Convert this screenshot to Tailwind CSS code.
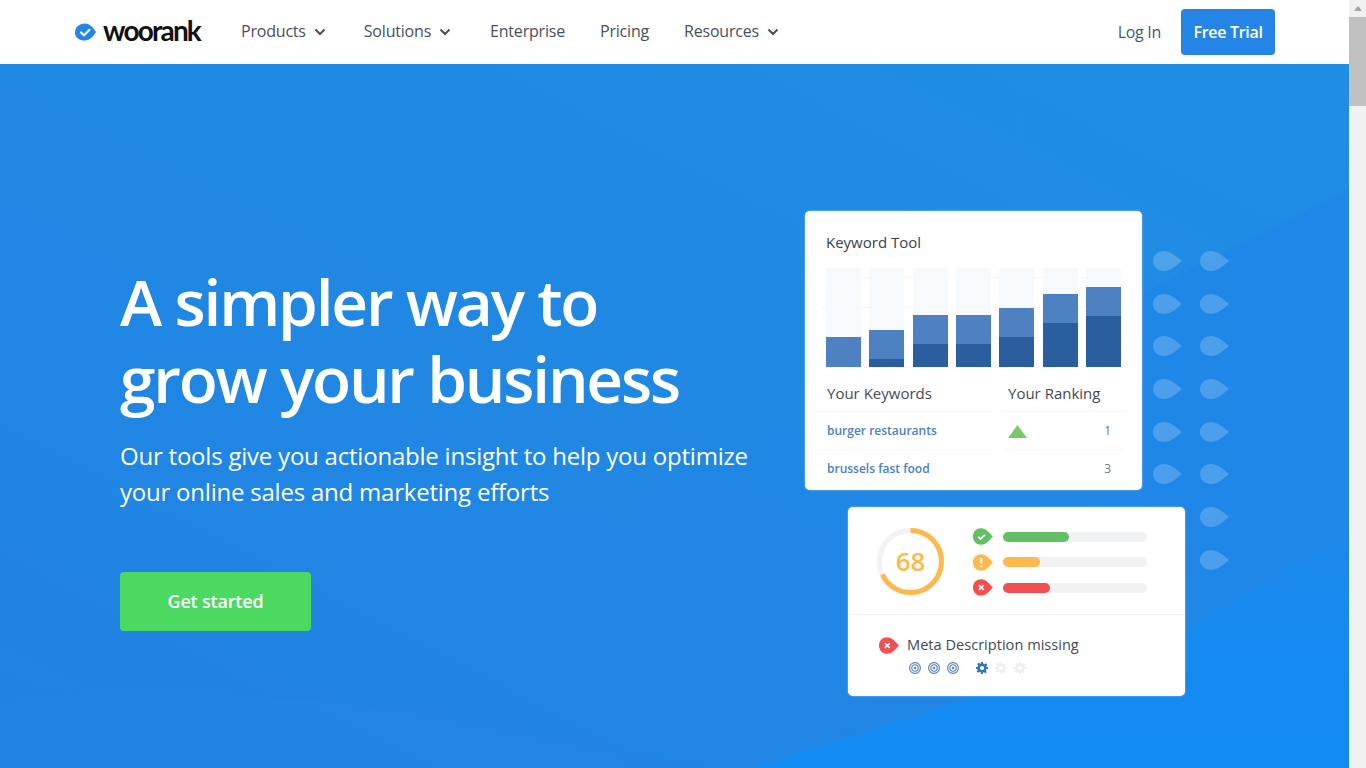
<!DOCTYPE html>
<html lang="en">
<head>
<meta charset="utf-8">
<title>WooRank</title>
<script src="https://cdn.jsdelivr.net/npm/@tailwindcss/browser@4"></script>
</head>
<body class="m-0 overflow-hidden font-['Open_Sans',sans-serif]">
<svg width="0" height="0" class="absolute">
  <defs>
    <symbol id="drop" viewBox="0 0 29 20"><path d="M0 10C0 4 5 0 11 0C18 0 24 6 29 10C24 14 18 20 11 20C5 20 0 16 0 10Z" fill="currentColor"/></symbol>
    <symbol id="target" viewBox="0 0 12 12"><circle cx="6" cy="6" r="5.4" fill="none" stroke="currentColor" stroke-width="1.1"/><circle cx="6" cy="6" r="3.2" fill="none" stroke="currentColor" stroke-width="1.1"/><circle cx="6" cy="6" r="1.2" fill="currentColor"/></symbol>
    <symbol id="gear" viewBox="0 0 12 12"><path d="M5 0h2l.3 1.7 1.1.5L9.9 1.2l1.4 1.4-1 1.5.5 1.1L12 5v2l-1.7.3-.5 1.1 1 1.5-1.4 1.4-1.5-1-1.1.5L7 12H5l-.3-1.7-1.1-.5-1.5 1-1.4-1.4 1-1.5-.5-1.1L0 7V5l1.7-.3.5-1.1-1-1.5L2.6.7l1.5 1 1.1-.5L5 0ZM6 3.9a2.1 2.1 0 1 0 0 4.2 2.1 2.1 0 0 0 0-4.2Z" fill="currentColor" fill-rule="evenodd"/></symbol>
    <linearGradient id="fade" x1="0" y1="0" x2="1" y2="0"><stop offset="0" stop-color="#1f85e6" stop-opacity="0"/><stop offset="0.6" stop-color="#1f86e6" stop-opacity="0.8"/><stop offset="1" stop-color="#1e87e8"/></linearGradient>
    <linearGradient id="glow" x1="0" y1="0" x2="0" y2="1"><stop offset="0" stop-color="#1c88ea"/><stop offset="0.45" stop-color="#168af0"/><stop offset="1" stop-color="#118af3"/></linearGradient>
  </defs>
</svg>
<div class="flex h-[768px] w-[1366px] overflow-hidden">
  <div class="flex w-[1349px] shrink-0 flex-col">
    <header class="flex h-[64px] shrink-0 items-center justify-between bg-white pl-[75px] pr-[74px]">
      <div class="flex items-center">
        <div class="flex w-[166px] items-center gap-[7px]">
          <svg width="21" height="18" viewBox="0 0 21 18"><path d="M0 9.5C0 4 4.500 .5 10 .5C15 .5 18.500 5 21 9C18.500 13 15 17.500 10 17.500C4.500 17.500 0 15 0 9.500Z" fill="#2386e6"/><path d="M6 9.500l3 2.800 5.500-5.500" fill="none" stroke="#fff" stroke-width="2.200" stroke-linecap="round" stroke-linejoin="round"/></svg>
          <span class="relative top-[-2px] text-[28px] leading-none font-bold tracking-[-1.800px] text-[#111] font-['Lato',sans-serif]">woorank</span>
        </div>
        <nav class="relative top-[-1px] flex items-center text-[16px] tracking-[-0.2px] text-[#4a4f5c]">
          <a class="flex items-center">Products<svg class="relative top-[1px] ml-[8px]" width="12" height="8" viewBox="0 0 12 8"><path d="M1.500 1.500L6 6l4.500-4.500" fill="none" stroke="#4a4f5c" stroke-width="2"/></svg></a>
          <a class="ml-[38px] flex items-center">Solutions<svg class="relative top-[1px] ml-[8px]" width="12" height="8" viewBox="0 0 12 8"><path d="M1.500 1.500L6 6l4.500-4.500" fill="none" stroke="#4a4f5c" stroke-width="2"/></svg></a>
          <a class="ml-[39px]">Enterprise</a>
          <a class="ml-[35px]">Pricing</a>
          <a class="ml-[35px] flex items-center">Resources<svg class="relative top-[1px] ml-[8px]" width="12" height="8" viewBox="0 0 12 8"><path d="M1.500 1.500L6 6l4.500-4.500" fill="none" stroke="#4a4f5c" stroke-width="2"/></svg></a>
        </nav>
      </div>
      <div class="flex items-center gap-[20px]">
        <a class="text-[16px] tracking-[-0.3px] text-[#3f5a78]">Log In</a>
        <a class="flex h-[46px] w-[94px] items-center justify-center rounded-[4px] bg-[#2485e6] text-[16px] font-semibold tracking-[-0.3px] text-white">Free Trial</a>
      </div>
    </header>

    <main class="relative flex flex-1 overflow-hidden bg-linear-to-tr from-[#2182e3] to-[#1f8ee3] pl-[120px]">
      <svg class="absolute inset-0" width="1349" height="704" viewBox="0 0 1349 704">
        <path d="M1349 124L1155 223L600 440V704H1349Z" fill="url(#fade)"/>
        <path d="M0 636C100 622 220 625 400 645L700 704H0Z" fill="#2484e4" fill-opacity="0.5"/>
        <path d="M755 704L1190 563L1349 468V704Z" fill="url(#glow)"/>
      </svg>

      <div class="relative w-[685px] shrink-0 pt-[199px]">
        <h1 class="text-[64px] leading-[77px] font-semibold tracking-[-2.2px] text-white">A simpler way to<br>grow your business</h1>
        <p class="mt-[21px] text-[24px] leading-[36px] tracking-[-0.22px] text-white">Our tools give you actionable insight to help you optimize<br>your online sales and marketing efforts</p>
        <a class="mt-[62px] flex h-[59px] w-[191px] items-center justify-center rounded-[4px] bg-[#4bd961] text-[18px] font-semibold tracking-[-0.2px] text-white">Get started</a>
      </div>

      <div class="absolute left-[1153px] top-[187px] grid grid-cols-[29px_29px] gap-x-[18px] gap-y-[22.700px] text-white/20">
        <svg width="29" height="20"><use href="#drop"/></svg><svg width="29" height="20"><use href="#drop"/></svg>
        <svg width="29" height="20"><use href="#drop"/></svg><svg width="29" height="20"><use href="#drop"/></svg>
        <svg width="29" height="20"><use href="#drop"/></svg><svg width="29" height="20"><use href="#drop"/></svg>
        <svg width="29" height="20"><use href="#drop"/></svg><svg width="29" height="20"><use href="#drop"/></svg>
        <svg width="29" height="20"><use href="#drop"/></svg><svg width="29" height="20"><use href="#drop"/></svg>
        <svg width="29" height="20"><use href="#drop"/></svg><svg width="29" height="20"><use href="#drop"/></svg>
        <svg width="29" height="20"><use href="#drop"/></svg><svg width="29" height="20"><use href="#drop"/></svg>
        <svg width="29" height="20"><use href="#drop"/></svg><svg width="29" height="20"><use href="#drop"/></svg>
      </div>

      <div class="relative flex flex-col pt-[147px]">
        <section class="h-[279px] w-[337px] rounded-[5px] bg-white pl-[21px] pr-[18px] pt-[21px] shadow-[0_0_2px_rgba(255,255,255,0.6)]">
          <h2 class="text-[15px] leading-[20px] font-medium text-[#3a3f4c]">Keyword Tool</h2>
          <div class="relative mt-[16px] flex h-[100px] w-[295px] gap-[8.330px] border-b border-[#f4f6f9]">
            <div class="absolute -left-[4px] -right-[4px] top-[9px] h-[1px] bg-[#f4f6f9]"></div>
            <div class="absolute -left-[4px] -right-[4px] top-[39px] h-[1px] bg-[#f4f6f9]"></div>
            <div class="absolute -left-[4px] -right-[4px] top-[69px] h-[1px] bg-[#f4f6f9]"></div>
            <div class="relative flex w-[35px] flex-col justify-end bg-[#f7fafd]"><div class="h-[30px] bg-[#4e81c2]"></div></div>
            <div class="relative flex w-[35px] flex-col justify-end bg-[#f7fafd]"><div class="h-[29px] bg-[#4e81c2]"></div><div class="h-[8px] bg-[#2b5e9c]"></div></div>
            <div class="relative flex w-[35px] flex-col justify-end bg-[#f7fafd]"><div class="h-[29px] bg-[#4e81c2]"></div><div class="h-[23px] bg-[#2b5e9c]"></div></div>
            <div class="relative flex w-[35px] flex-col justify-end bg-[#f7fafd]"><div class="h-[29px] bg-[#4e81c2]"></div><div class="h-[23px] bg-[#2b5e9c]"></div></div>
            <div class="relative flex w-[35px] flex-col justify-end bg-[#f7fafd]"><div class="h-[29px] bg-[#4e81c2]"></div><div class="h-[30px] bg-[#2b5e9c]"></div></div>
            <div class="relative flex w-[35px] flex-col justify-end bg-[#f7fafd]"><div class="h-[29px] bg-[#4e81c2]"></div><div class="h-[44px] bg-[#2b5e9c]"></div></div>
            <div class="relative flex w-[35px] flex-col justify-end bg-[#f7fafd]"><div class="h-[29px] bg-[#4e81c2]"></div><div class="h-[51px] bg-[#2b5e9c]"></div></div>
          </div>
          <div class="-ml-[10px] mt-[13px] grid w-[308px] grid-cols-[177px_121px] gap-x-[10px]">
            <div>
              <div class="h-[31px] border-b border-[#f3f4f6] pl-[11px] text-[15px] leading-[24px] text-[#454a57]">Your Keywords</div>
              <div class="flex h-[38px] items-center border-b border-[#f7f8fa] pl-[11px] pt-[1px] text-[12px] font-semibold text-[#4a80c4]">burger restaurants</div>
              <div class="flex h-[37px] items-center pl-[11px] text-[12px] font-semibold text-[#4a80c4]">brussels fast food</div>
            </div>
            <div>
              <div class="h-[31px] border-b border-[#f3f4f6] pl-[5px] text-[15px] leading-[24px] text-[#454a57]">Your Ranking</div>
              <div class="flex h-[38px] items-center justify-between border-b border-[#f7f8fa] pl-[5px] pr-[13px] pt-[1px] text-[12px] text-[#777]"><svg width="19" height="13" viewBox="0 0 19 13"><path d="M9.500 0L19 13H0Z" fill="#7bc86c"/></svg><span>1</span></div>
              <div class="flex h-[37px] items-center justify-end pr-[13px] text-[12px] text-[#777]">3</div>
            </div>
          </div>
        </section>

        <section class="ml-[43px] mt-[17px] h-[189px] w-[337px] rounded-[5px] bg-white shadow-[0_0_2px_rgba(255,255,255,0.6)]">
          <div class="flex h-[108px] items-start border-b border-[#f1f2f4] pl-[29px] pt-[21px]">
            <div class="relative flex h-[67px] w-[67px] shrink-0 items-center justify-center">
              <svg class="absolute inset-0" width="67" height="67" viewBox="0 0 67 67"><circle cx="33.500" cy="33.500" r="31" fill="none" stroke="#f1f2f4" stroke-width="5"/><circle cx="33.500" cy="33.500" r="31" fill="none" stroke="#fdb94c" stroke-width="5" stroke-dasharray="132.500 195" transform="rotate(-90 33.500 33.500)"/></svg>
              <span class="text-[26px] font-semibold text-[#fdb94c]">68</span>
            </div>
            <div class="ml-[29px] flex flex-col gap-[8.500px]">
              <div class="flex h-[17px] items-center gap-[10px]">
                <svg width="20" height="17" viewBox="0 0 29 24"><path d="M0 12C0 5 5 0 12 0C19 0 24 7 29 12C24 17 19 24 12 24C5 24 0 19 0 12Z" fill="#63bf63"/><path d="M7.500 12.500l3.500 3 6.500-6" fill="none" stroke="#fff" stroke-width="2.500"/></svg>
                <div class="h-[10px] w-[144px] rounded-full bg-[#f1f2f4]"><div class="h-[10px] w-[66px] rounded-full bg-[#63bf63]"></div></div>
              </div>
              <div class="flex h-[17px] items-center gap-[10px]">
                <svg width="20" height="17" viewBox="0 0 29 24"><path d="M0 12C0 5 5 0 12 0C19 0 24 7 29 12C24 17 19 24 12 24C5 24 0 19 0 12Z" fill="#fdb94c"/><path d="M12 5.500v8M12 16.500v2.500" fill="none" stroke="#fff" stroke-width="3"/></svg>
                <div class="h-[10px] w-[144px] rounded-full bg-[#f1f2f4]"><div class="h-[10px] w-[37px] rounded-full bg-[#fdb94c]"></div></div>
              </div>
              <div class="flex h-[17px] items-center gap-[10px]">
                <svg width="20" height="17" viewBox="0 0 29 24"><path d="M0 12C0 5 5 0 12 0C19 0 24 7 29 12C24 17 19 24 12 24C5 24 0 19 0 12Z" fill="#f44f50"/><path d="M8.500 8.500l7 7M15.500 8.500l-7 7" fill="none" stroke="#fff" stroke-width="2.500"/></svg>
                <div class="h-[10px] w-[144px] rounded-full bg-[#f1f2f4]"><div class="h-[10px] w-[47px] rounded-full bg-[#f44f50]"></div></div>
              </div>
            </div>
          </div>
          <div class="pl-[31px] pt-[19px]">
            <div class="flex h-[22px] items-center gap-[8px]">
              <svg width="20" height="17" viewBox="0 0 29 24"><path d="M0 12C0 5 5 0 12 0C19 0 24 7 29 12C24 17 19 24 12 24C5 24 0 19 0 12Z" fill="#f44f50"/><path d="M8.500 8.500l7 7M15.500 8.500l-7 7" fill="none" stroke="#fff" stroke-width="2.500"/></svg>
              <span class="text-[14.600px] text-[#454a57]">Meta Description missing</span>
            </div>
            <div class="ml-[30px] mt-[6px] flex items-center text-[#4a80c4]">
              <svg width="12" height="12"><use href="#target"/></svg>
              <svg class="ml-[7px]" width="12" height="12"><use href="#target"/></svg>
              <svg class="ml-[7px]" width="12" height="12"><use href="#target"/></svg>
              <svg class="ml-[17px] text-[#2f75bd]" width="12" height="12"><use href="#gear"/></svg>
              <svg class="ml-[7px] text-[#eef0f2]" width="12" height="12"><use href="#gear"/></svg>
              <svg class="ml-[7px] text-[#eef0f2]" width="12" height="12"><use href="#gear"/></svg>
            </div>
          </div>
        </section>
      </div>
    </main>
  </div>

  <div class="flex w-[17px] shrink-0 flex-col items-center bg-[#f1f1f1]">
    <div class="flex h-[17px] items-center justify-center"><div class="h-0 w-0 border-x-[4px] border-b-[5px] border-x-transparent border-b-[#a3a3a3]"></div></div>
    <div class="h-[89px] w-[17px] bg-[#c1c1c1]"></div>
  </div>
</div>
</body>
</html>
